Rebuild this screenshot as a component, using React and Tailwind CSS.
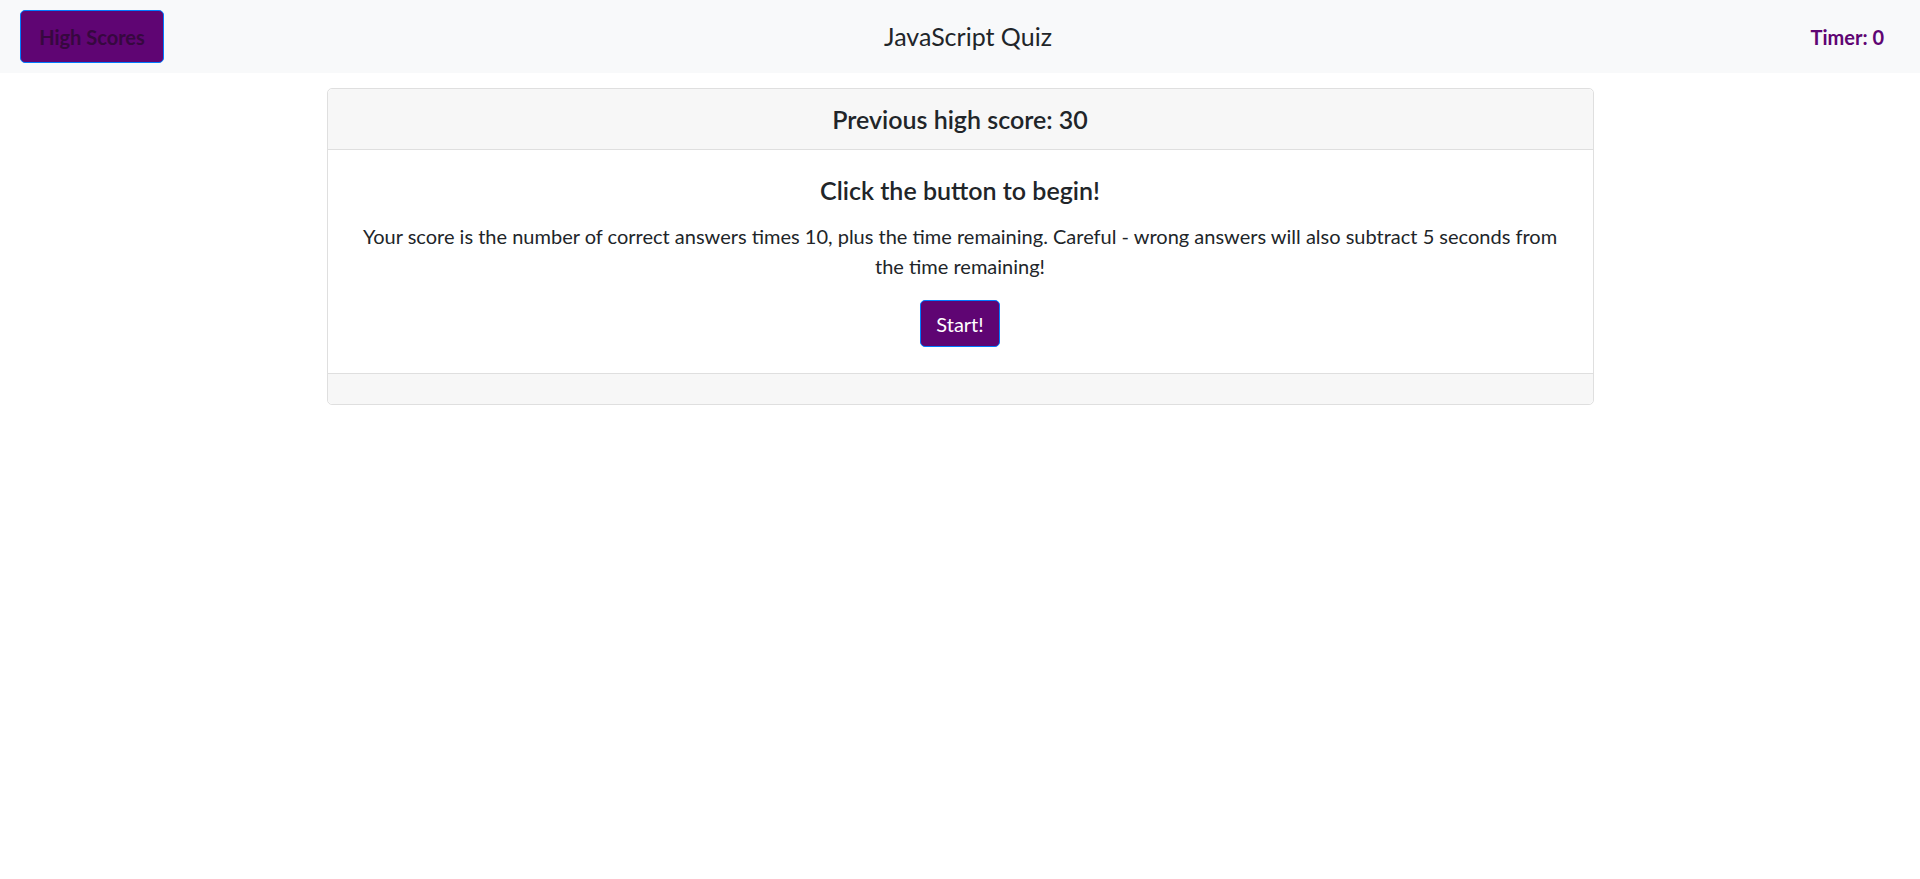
import React, { useState } from 'react';

const App = () => {
  const [timer] = useState(0);
  const [highScore] = useState(30);

  return (
    <div className="min-h-screen bg-white text-[#212529]" style={{ fontFamily: 'Lato, "Noto Sans", sans-serif' }}>
      <nav className="flex items-center h-[73px] px-[20px] bg-[#f8f9fa]">
        <div className="flex-1">
          <button className="h-[53px] w-[144px] rounded-[5px] border border-[#007bff] bg-[#5f0573] text-[20px] font-bold text-[#36083f]">
            High Scores
          </button>
        </div>
        <div className="pl-[32px] text-[25px]">JavaScript Quiz</div>
        <div className="flex-1 flex justify-end pr-[16px]">
          <span className="text-[20px] font-bold text-[#5f0573]">Timer: {timer}</span>
        </div>
      </nav>

      <div className="mx-auto mt-[15px] w-[1267px] rounded-[5px] border border-[#dfdfdf] text-center">
        <div className="px-[25px] py-[15px] bg-[#f7f7f7] border-b border-[#dfdfdf] rounded-t-[5px]">
          <h5 className="text-[25px] leading-[30px] font-semibold">Previous high score: {highScore}</h5>
        </div>
        <div className="px-[25px] pt-[25px] pb-[26px]">
          <h5 className="text-[25px] leading-[30px] font-semibold mb-[16px]">Click the button to begin!</h5>
          <p className="text-[20px] leading-[30px] mb-[19px]">
            Your score is the number of correct answers times 10, plus the time remaining. Careful - wrong answers will also subtract 5 seconds from the time remaining!
          </p>
          <button className="h-[47px] px-[15px] rounded-[5px] border border-[#007bff] bg-[#5f0573] text-[20px] text-white">
            Start!
          </button>
        </div>
        <div className="h-[31px] bg-[#f7f7f7] border-t border-[#dfdfdf] rounded-b-[5px]"></div>
      </div>
    </div>
  );
};

export default App;
